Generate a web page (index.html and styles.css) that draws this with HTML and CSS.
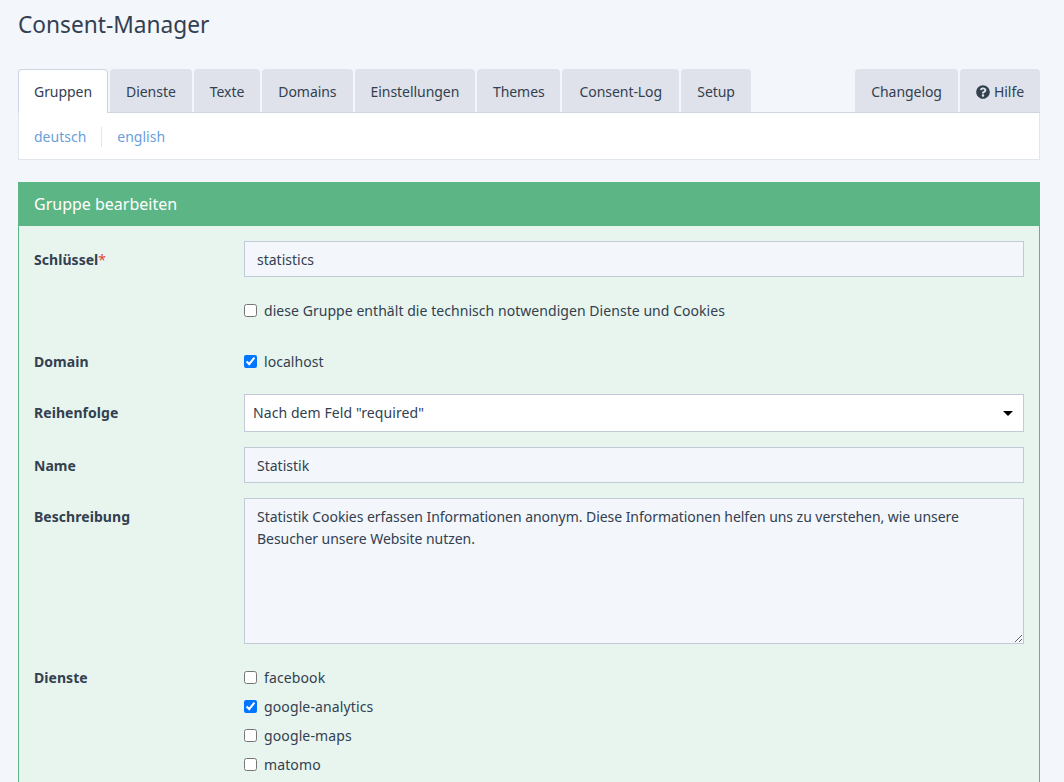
FILE: index.html
```html
<!DOCTYPE html>
<html lang="de">
<head>
  <meta charset="UTF-8">
  <meta name="viewport" content="width=device-width, initial-scale=1.0">
  <title>Consent-Manager</title>
  <link rel="stylesheet" href="styles.css">
</head>
<body>
  <h1 class="page-title">Consent-Manager</h1>

  <!-- Haupt-Navigation -->
  <nav class="tabs">
    <a class="tab active" href="#">Gruppen</a>
    <a class="tab" href="#">Dienste</a>
    <a class="tab" href="#">Texte</a>
    <a class="tab" href="#">Domains</a>
    <a class="tab" href="#">Einstellungen</a>
    <a class="tab tab-themes" href="#">Themes</a>
    <a class="tab tab-log" href="#">Consent-Log</a>
    <a class="tab" href="#">Setup</a>
    <a class="tab tab-right" href="#">Changelog</a>
    <a class="tab" href="#">
      <svg class="help-icon" viewBox="0 0 512 512"><path d="M504 256c0 136.997-111.043 248-248 248S8 392.997 8 256C8 119.083 119.043 8 256 8s248 111.083 248 248zM262.655 90c-54.497 0-89.255 22.957-116.549 63.758-3.536 5.286-2.353 12.415 2.715 16.258l34.699 26.31c5.205 3.947 12.621 3.008 16.665-2.122 17.864-22.658 30.113-35.797 57.303-35.797 20.429 0 45.698 13.148 45.698 32.958 0 14.976-12.363 22.667-32.534 33.976C247.128 238.528 216 254.941 216 296v4c0 6.627 5.373 12 12 12h56c6.627 0 12-5.373 12-12v-1.333c0-28.462 83.186-29.647 83.186-106.667 0-58.002-60.165-102-116.531-102zM256 338c-25.365 0-46 20.635-46 46 0 25.364 20.635 46 46 46s46-20.636 46-46c0-25.365-20.635-46-46-46z"/></svg>
      Hilfe
    </a>
  </nav>

  <!-- Sprachen -->
  <div class="lang-bar">
    <a href="#">deutsch</a>
    <a href="#">english</a>
  </div>

  <section class="panel">
    <header class="panel-heading">Gruppe bearbeiten</header>
    <form class="panel-body">
      <div class="row">
        <label class="row-label">Schlüssel<span class="required">*</span></label>
        <input class="field" type="text" value="statistics">
      </div>
      <div class="row">
        <span class="row-label"></span>
        <label class="check"><input type="checkbox"> diese Gruppe enthält die technisch notwendigen Dienste und Cookies</label>
      </div>
      <div class="row">
        <span class="row-label">Domain</span>
        <label class="check"><input type="checkbox" checked> localhost</label>
      </div>
      <div class="row">
        <label class="row-label">Reihenfolge</label>
        <div class="select-wrap">
          <select class="select">
            <option>Nach dem Feld "required"</option>
          </select>
        </div>
      </div>
      <div class="row">
        <label class="row-label">Name</label>
        <input class="field" type="text" value="Statistik">
      </div>
      <div class="row">
        <label class="row-label">Beschreibung</label>
        <textarea class="field area">Statistik Cookies erfassen Informationen anonym. Diese Informationen helfen uns zu verstehen, wie unsere Besucher unsere Website nutzen.</textarea>
      </div>
      <div class="row row-list">
        <span class="row-label">Dienste</span>
        <div class="check-list">
          <label class="check"><input type="checkbox"> facebook</label>
          <label class="check"><input type="checkbox" checked> google-analytics</label>
          <label class="check"><input type="checkbox"> google-maps</label>
          <label class="check"><input type="checkbox"> matomo</label>
        </div>
      </div>
    </form>
  </section>
</body>
</html>
```

FILE: styles.css
```css
html, body {
  height: 782px;
  overflow: hidden;
}
body {
  margin: 0;
  padding: 0 24px 0 18px;
  background-color: #f3f6fb;
  color: #324050;
  font-family: "Noto Sans", Arial, sans-serif;
  font-size: 14px;
  line-height: 20px;
}
a {
  text-decoration: none;
  color: inherit;
}
.page-title {
  margin: 0;
  padding-top: 9px;
  height: 60px;
  box-sizing: border-box;
  font-size: 22.7px;
  line-height: 32px;
  font-weight: 400;
}
/* Tabs */
.tabs {
  display: flex;
  gap: 2px;
  margin-top: 9px;
  height: 44px;
  border-bottom: 1px solid #cfd5e0;
  box-sizing: border-box;
  letter-spacing: -0.05px;
}
.tab {
  display: flex;
  align-items: center;
  gap: 4px;
  padding: 2px 16px 0;
  height: 43px;
  box-sizing: border-box;
  background-color: #dfe2ea;
  border-radius: 4px 4px 0 0;
}
.tab.active {
  height: 44px;
  background-color: #fff;
  border: 1px solid #cfd5e0;
  border-bottom: 0;
  padding: 1px 15px 0;
}
.tab-themes {
  width: 83px;
  justify-content: center;
}
.tab-log {
  width: 117px;
  justify-content: center;
}
.tab-right {
  margin-left: auto;
}
.help-icon {
  width: 14px;
  height: 14px;
  fill: #324050;
}
.lang-bar {
  display: flex;
  align-items: center;
  height: 47px;
  box-sizing: border-box;
  padding: 2px 15px 0;
  background-color: #fff;
  border: 1px solid #e1e5ec;
  border-top: 0;
  color: #6a9fdc;
}
.lang-bar a:first-child {
  padding-right: 15px;
  border-right: 1px solid #e1e5ec;
  margin-right: 15px;
}
/* Panel */
.panel {
  margin-top: 22px;
}
.panel-heading {
  height: 44px;
  line-height: 44px;
  padding: 0 16px;
  background-color: #5cb585;
  color: #fff;
  font-size: 16px;
}
.panel-body {
  height: 556px;
  box-sizing: border-box;
  padding: 15px 15px 0;
  background-color: #e8f5ee;
  border-left: 1px solid #5cb585;
  border-right: 1px solid #5cb585;
}
.row {
  display: flex;
  align-items: flex-start;
  margin-bottom: 15px;
}
.row-list {
  margin-bottom: 0;
}
.row-label {
  flex: 0 0 210px;
  padding-top: 9px;
  font-weight: 700;
  letter-spacing: 0.05px;
}
.required {
  color: #e0433a;
  font-weight: 400;
}
.field {
  flex: 1;
  height: 36px;
  box-sizing: border-box;
  padding: 6px 12px;
  background-color: #f3f6fb;
  border: 1px solid #c1cad6;
  color: #324050;
  font: inherit;
  outline: 0;
}
.area {
  height: 146px;
  padding-top: 7px;
  display: block;
  line-height: 22px;
  letter-spacing: -0.05px;
}
.select-wrap {
  flex: 1;
  position: relative;
}
.select-wrap::after {
  content: "";
  position: absolute;
  right: 11px;
  top: 17px;
  border-left: 5px solid transparent;
  border-right: 5px solid transparent;
  border-top: 5px solid #000;
}
.select {
  display: block;
  width: 100%;
  height: 38px;
  padding: 0 8px;
  background-color: #fff;
  border: 1px solid #c1cad6;
  border-radius: 0;
  color: #324050;
  font: inherit;
  letter-spacing: 0.08px;
  appearance: none;
}
.check {
  display: flex;
  align-items: center;
  height: 36px;
  padding-top: 2px;
  box-sizing: border-box;
  letter-spacing: 0.05px;
}
.check input {
  width: 13px;
  height: 13px;
  margin: -2px 7px 0 0;
}
.check-list {
  display: flex;
  flex-direction: column;
  padding-top: 4px;
}
.check-list .check {
  height: 29px;
  padding-top: 0;
  letter-spacing: 0.12px;
}
.check-list .check input {
  margin-top: 0;
}
```
